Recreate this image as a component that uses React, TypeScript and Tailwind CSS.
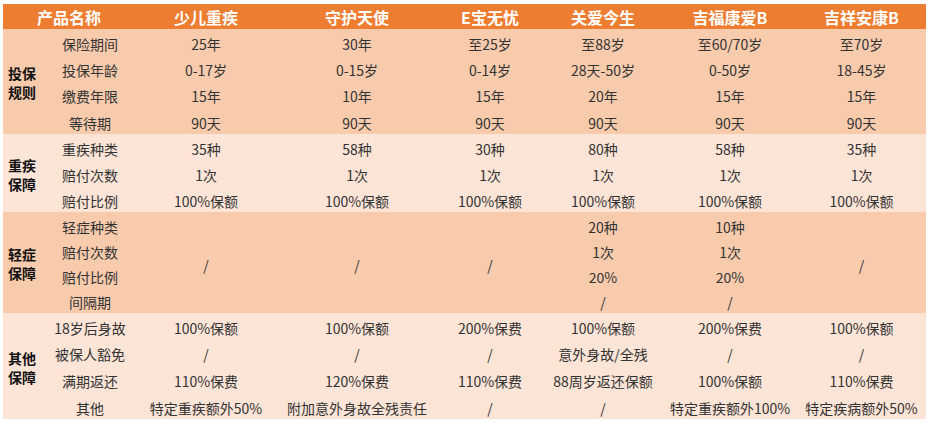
import React from "react";

type Cell = { text: string; rowSpan?: number };
type Row = { item: string; cells: Cell[]; h: string };
type Group = { label: [string, string]; bg: string; rows: Row[] };

const products = ["少儿重疾", "守护天使", "E宝无忧", "关爱今生", "吉福康爱B", "吉祥安康B"];

const c = (t: string, rowSpan?: number): Cell => ({ text: t, rowSpan });

const groups: Group[] = [
  {
    label: ["投保", "规则"],
    bg: "bg-[#f8cbad]",
    rows: [
      { item: "保险期间", h: "h-[26px]", cells: ["25年", "30年", "至25岁", "至88岁", "至60/70岁", "至70岁"].map((t) => c(t)) },
      { item: "投保年龄", h: "h-[26px]", cells: ["0-17岁", "0-15岁", "0-14岁", "28天-50岁", "0-50岁", "18-45岁"].map((t) => c(t)) },
      { item: "缴费年限", h: "h-[26px]", cells: ["15年", "10年", "15年", "20年", "15年", "15年"].map((t) => c(t)) },
      { item: "等待期", h: "h-[27px]", cells: ["90天", "90天", "90天", "90天", "90天", "90天"].map((t) => c(t)) },
    ],
  },
  {
    label: ["重疾", "保障"],
    bg: "bg-[#fce4d6]",
    rows: [
      { item: "重疾种类", h: "h-[26px]", cells: ["35种", "58种", "30种", "80种", "58种", "35种"].map((t) => c(t)) },
      { item: "赔付次数", h: "h-[26px]", cells: ["1次", "1次", "1次", "1次", "1次", "1次"].map((t) => c(t)) },
      { item: "赔付比例", h: "h-[26px]", cells: ["100%保额", "100%保额", "100%保额", "100%保额", "100%保额", "100%保额"].map((t) => c(t)) },
    ],
  },
  {
    label: ["轻症", "保障"],
    bg: "bg-[#f8cbad]",
    rows: [
      { item: "轻症种类", h: "h-[25px]", cells: [c("/", 4), c("/", 4), c("/", 4), c("20种"), c("10种"), c("/", 4)] },
      { item: "赔付次数", h: "h-[25px]", cells: [c("1次"), c("1次")] },
      { item: "赔付比例", h: "h-[25px]", cells: [c("20%"), c("20%")] },
      { item: "间隔期", h: "h-[26px]", cells: [c("/"), c("/")] },
    ],
  },
  {
    label: ["其他", "保障"],
    bg: "bg-[#fce4d6]",
    rows: [
      { item: "18岁后身故", h: "h-[26px]", cells: ["100%保额", "100%保额", "200%保费", "100%保额", "200%保费", "100%保额"].map((t) => c(t)) },
      { item: "被保人豁免", h: "h-[26px]", cells: ["/", "/", "/", "意外身故/全残", "/", "/"].map((t) => c(t)) },
      { item: "满期返还", h: "h-[27px]", cells: ["110%保费", "120%保费", "110%保费", "88周岁返还保额", "100%保额", "110%保费"].map((t) => c(t)) },
      { item: "其他", h: "h-[27px]", cells: ["特定重疾额外50%", "附加意外身故全残责任", "/", "/", "特定重疾额外100%", "特定疾病额外50%"].map((t) => c(t)) },
    ],
  },
];

export default function App() {
  return (
    <div className="w-[931px] h-[427px] bg-white pl-[3px] pt-[4px] font-['Noto_Sans_CJK_SC','Noto_Sans',sans-serif]">
      <table className="table-fixed border-collapse w-[923px] text-[14px] leading-[18px] text-[#333333]">
        <colgroup>
          <col className="w-[42px]" />
          <col className="w-[90px]" />
          <col className="w-[142px]" />
          <col className="w-[160px]" />
          <col className="w-[106px]" />
          <col className="w-[120px]" />
          <col className="w-[134px]" />
          <col className="w-[129px]" />
        </colgroup>
        <thead>
          <tr className="h-[25px] bg-[#ed7d31] text-white font-bold text-[16px]">
            <th colSpan={2} className="p-0 text-center align-middle font-bold">产品名称</th>
            {products.map((p) => (
              <th key={p} className="p-0 text-center align-middle font-bold">{p}</th>
            ))}
          </tr>
        </thead>
        <tbody>
          {groups.map((g) =>
            g.rows.map((r, ri) => (
              <tr key={g.label.join("") + r.item} className={`${r.h} ${g.bg}`}>
                {ri === 0 && (
                  <td rowSpan={g.rows.length} className="p-0 pl-[5px] align-middle text-left font-bold text-[#111111] leading-[19px] whitespace-nowrap">
                    <div className="pt-[3px]">{g.label[0]}</div>
                    <div>{g.label[1]}</div>
                  </td>
                )}
                <td className="p-0 pt-[4px] text-center align-middle whitespace-nowrap">{r.item}</td>
                {r.cells.map((cell, ci) => (
                  <td
                    key={ci}
                    rowSpan={cell.rowSpan}
                    className="p-0 pt-[4px] text-center align-middle whitespace-nowrap"
                  >
                    {cell.text}
                  </td>
                ))}
              </tr>
            ))
          )}
        </tbody>
      </table>
    </div>
  );
}
